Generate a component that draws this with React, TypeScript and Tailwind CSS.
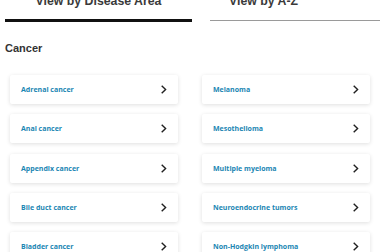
import React from "react";

const left = ["Adrenal cancer", "Anal cancer", "Appendix cancer", "Bile duct cancer", "Bladder cancer", "Bone cancer"];
const right = ["Melanoma", "Mesothelioma", "Multiple myeloma", "Neuroendocrine tumors", "Non-Hodgkin lymphoma", "Oral cancer"];

function Chevron() {
  return (
    <svg width="6" height="9" viewBox="0 0 6 9" fill="none">
      <path d="M1.2 1.2L4.6 4.5L1.2 7.8" stroke="#1f1f1f" strokeWidth="1.4" strokeLinecap="square" />
    </svg>
  );
}

function Card({ label }: { label: string }) {
  return (
    <div className="h-[29px] bg-white rounded-[2px] shadow-[0_1px_4px_rgba(0,0,0,0.13)] flex items-center justify-between pl-[11px] pr-[11px]">
      <span className="text-[7px] font-bold text-[#1b86b3] leading-none" style={{ fontFamily: '"Open Sans", sans-serif' }}>
        {label}
      </span>
      <Chevron />
    </div>
  );
}

export default function App() {
  const items: string[] = [];
  for (let i = 0; i < left.length; i++) {
    items.push(left[i], right[i]);
  }
  return (
    <div className="w-[380px] h-[252px] overflow-hidden bg-white" style={{ fontFamily: '"Liberation Sans", Arial, sans-serif' }}>
      <div className="flex items-start -mt-[6px]">
        <div className="ml-[5px] w-[187px] text-center border-b-[3px] border-[#111] pb-[11px] leading-[14px] text-[12.3px] font-bold text-[#3a3a3a]">
          View by Disease Area
        </div>
        <div className="ml-[18px] flex-1 border-b border-[#9a9a9a] pl-[19px] pb-[12px] leading-[14px] text-[12.3px] font-bold text-[#3a3a3a]">
          View by A-Z
        </div>
      </div>
      <div className="mt-[20px] ml-[5px] text-[11px] leading-[13px] font-bold text-[#333]">Cancer</div>
      <div className="mt-[20px] px-[10px] grid grid-cols-2 gap-x-[24px] gap-y-[10.25px]">
        {items.map((t) => (
          <Card key={t} label={t} />
        ))}
      </div>
    </div>
  );
}
